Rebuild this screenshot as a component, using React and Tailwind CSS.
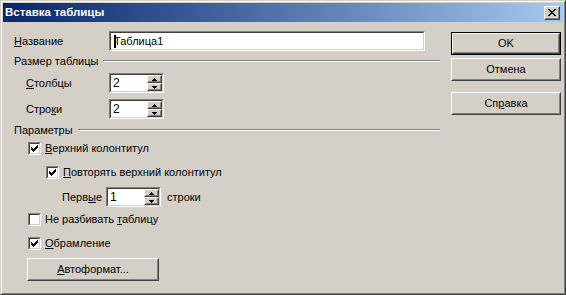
import React from "react";

const FONT = "font-['Liberation_Sans',Arial,sans-serif]";

function Sunken({ className = "", children }) {
  return (
    <div className={`border border-t-[#808080] border-l-[#808080] border-b-white border-r-white ${className}`}>
      <div className="flex h-full w-full items-center border border-t-[#404040] border-l-[#404040] border-b-[#d4d0c8] border-r-[#d4d0c8] bg-white">
        {children}
      </div>
    </div>
  );
}

function Raised({ className = "", children }) {
  return (
    <div className={`border border-t-white border-l-white border-b-[#404040] border-r-[#404040] bg-[#d4d0c8] ${className}`}>
      <div className="flex h-full w-full items-center justify-center border border-t-[#d4d0c8] border-l-[#d4d0c8] border-b-[#808080] border-r-[#808080]">
        {children}
      </div>
    </div>
  );
}

function Arrow({ up }) {
  return (
    <svg width="5" height="3" viewBox="0 0 5 3" shapeRendering="crispEdges">
      {up ? (
        <path d="M2 0h1v1h1v1h1v1H0V2h1V1h1z" fill="#000" />
      ) : (
        <path d="M0 0h5v1H4v1H3v1H2V2H1V1H0z" fill="#000" />
      )}
    </svg>
  );
}

function Spin({ value, className = "" }) {
  return (
    <Sunken className={`h-[20px] w-[55px] ${className}`}>
      <div className="flex h-full w-full">
        <div className="flex flex-1 items-center pl-[2px] text-[12px] leading-none">{value}</div>
        <div className="flex w-[15px] flex-col">
          <Raised className="h-[8px]"><Arrow up /></Raised>
          <Raised className="h-[8px]"><Arrow /></Raised>
        </div>
      </div>
    </Sunken>
  );
}

function Check({ checked, className = "", children }) {
  return (
    <div className={`flex h-[13px] items-center ${className}`}>
      <div className="h-[13px] w-[13px] border border-t-[#808080] border-l-[#808080] border-b-white border-r-white">
        <div className="flex h-full w-full items-center justify-center border border-t-[#404040] border-l-[#404040] border-b-[#d4d0c8] border-r-[#d4d0c8] bg-white">
          {checked && (
            <svg width="7" height="7" viewBox="0 0 7 7" shapeRendering="crispEdges">
              <path d="M6 0h1v3H6v1H5v1H4v1H3v1H2V6H1V5H0V2h1v1h1v1h1V3h1V2h1V1h1z" fill="#000" />
            </svg>
          )}
        </div>
      </div>
      <span className="ml-[4px] text-[11px] leading-none">{children}</span>
    </div>
  );
}

function Group({ title, className = "" }) {
  return (
    <div className={`flex h-[14px] items-center ${className}`}>
      <span className="text-[11px] leading-none">{title}</span>
      <div className="ml-[5px] flex-1 border-t border-b border-t-[#808080] border-b-white" />
    </div>
  );
}

export default function App() {
  return (
    <div className={`${FONT} h-[295px] w-[566px] select-none border border-t-[#d4d0c8] border-l-[#d4d0c8] border-b-[#404040] border-r-[#404040] bg-[#d4d0c8] text-black`}>
      <div className="flex h-full w-full flex-col border border-t-white border-l-white border-b-[#808080] border-r-[#808080] px-[1px] pt-[1px]">
        {/* Title bar */}
        <div className="flex h-[19px] items-center bg-gradient-to-r from-[#0a246a] to-[#a6caf0] pl-[2px] pr-[3px]">
          <span className="flex-1 text-[11.5px] font-bold leading-none text-white">Вставка таблицы</span>
          <Raised className="h-[14px] w-[16px]">
            <svg width="8" height="7" viewBox="0 0 8 7" shapeRendering="crispEdges">
              <path d="M0 0h2v1h1v1h2V1h1V0h2v1H7v1H6v1H5v1h1v1h1v1h1v1H6V6H5V5H3v1H2v1H0V6h1V5h1V4h1V3H2V2H1V1H0z" fill="#000" />
            </svg>
          </Raised>
        </div>

        {/* Body */}
        <div className="flex flex-1 pt-[9px]">
          {/* Left column */}
          <div className="ml-[11px] flex w-[426px] flex-col">
            <div className="flex h-[20px] items-center">
              <span className="w-[95px] text-[11px] leading-none"><u>Н</u>азвание</span>
              <Sunken className="h-[20px] w-[316px]">
                <div className="relative flex h-full items-center pl-[3px] text-[11px] leading-none">
                  <span>Таблица1</span>
                  <span className="absolute left-[3px] top-[2px] h-[13px] w-[2px] bg-black" />
                </div>
              </Sunken>
            </div>

            <Group title="Размер таблицы" className="mt-[3px]" />

            <div className="mt-[5px] flex h-[20px] items-center">
              <span className="ml-[12px] w-[83px] text-[11px] leading-none"><u>С</u>толбцы</span>
              <Spin value="2" />
            </div>
            <div className="mt-[6px] flex h-[20px] items-center">
              <span className="ml-[12px] w-[83px] text-[11px] leading-none">Стро<u>к</u>и</span>
              <Spin value="2" />
            </div>

            <Group title="Параметры" className="mt-[4px]" />

            <Check checked className="ml-[14px] mt-[5px]"><u>В</u>ерхний колонтитул</Check>
            <Check checked className="ml-[32px] mt-[11px]"><u>П</u>овторять верхний колонтитул</Check>

            <div className="ml-[48px] mt-[8px] flex h-[20px] items-center">
              <span className="w-[44px] text-[11px] leading-none">Перв<u>ы</u>е</span>
              <Spin value="1" />
              <span className="ml-[6px] text-[11px] leading-none">строки</span>
            </div>

            <Check className="ml-[14px] mt-[6px]">Не разбивать <u>т</u>аблицу</Check>
            <Check checked className="ml-[14px] mt-[11px]"><u>О</u>брамление</Check>

            <Raised className="ml-[13px] mt-[8px] h-[23px] w-[132px]">
              <span className="text-[11px] leading-none"><u>А</u>втоформат...</span>
            </Raised>
          </div>

          {/* Right column */}
          <div className="ml-[11px] mt-[1px] flex w-[110px] flex-col">
            <div className="h-[23px] border border-black">
              <Raised className="h-full w-full">
                <span className="text-[11px] leading-none">OK</span>
              </Raised>
            </div>
            <Raised className="mt-[3px] h-[23px]">
              <span className="text-[11px] leading-none">Отмена</span>
            </Raised>
            <Raised className="mt-[11px] h-[23px]">
              <span className="text-[11px] leading-none">Сп<u>р</u>авка</span>
            </Raised>
          </div>
        </div>
      </div>
    </div>
  );
}
